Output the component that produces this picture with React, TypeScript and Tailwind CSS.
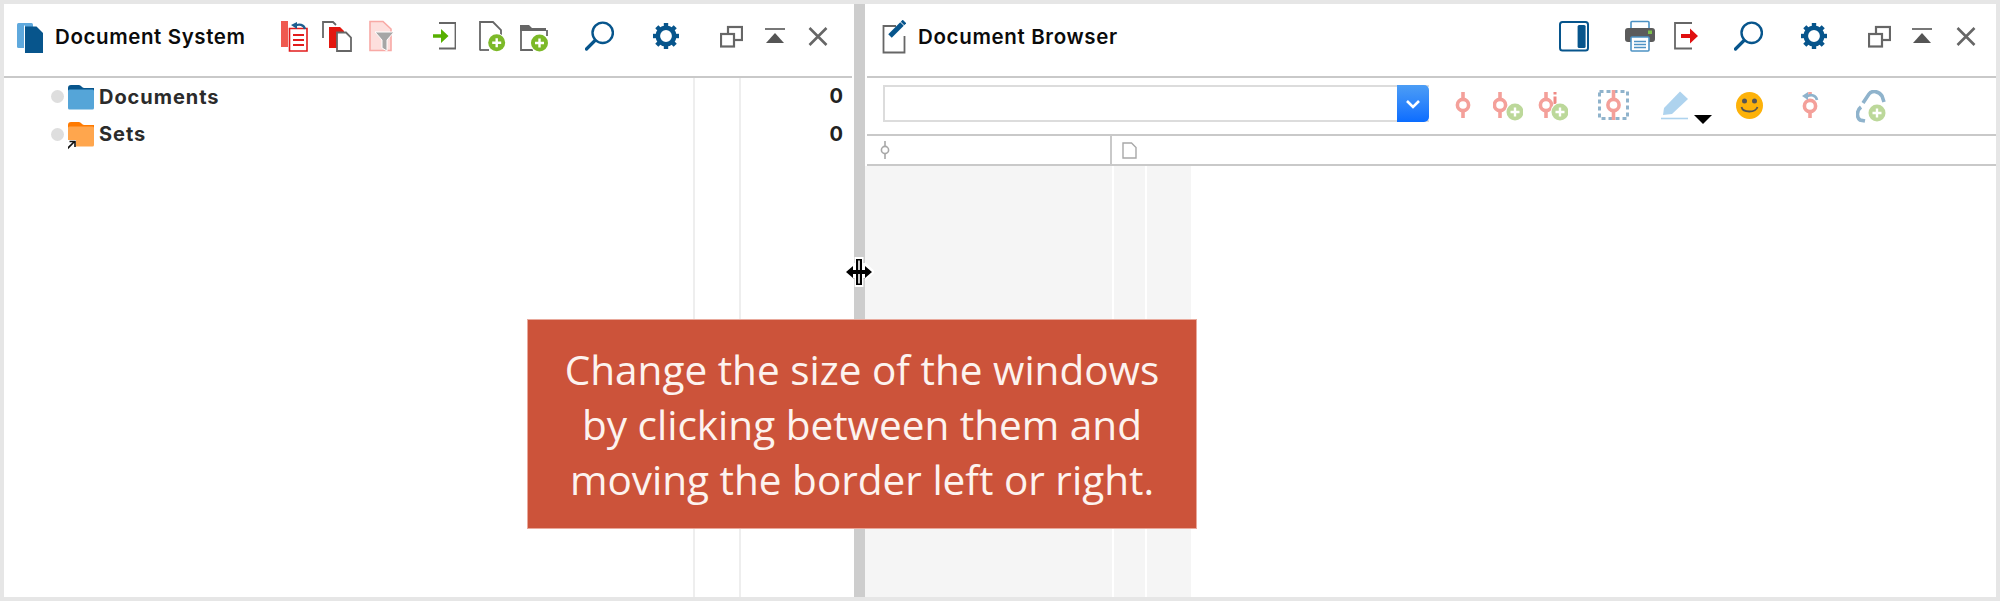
import React from 'react';

const BLUE = '#07558c';
const GRAY = '#666666';
const PINK = '#f4a09a';
const STEEL = '#8fb3cc';

function Svg({ w, h = 32, children, className = '' }: { w: number; h?: number; children: React.ReactNode; className?: string }) {
  return (
    <svg width={w} height={h} viewBox={`0 0 ${w} ${h}`} fill="none" className={`block shrink-0 ${className}`}>
      {children}
    </svg>
  );
}

function Plus({ cx, cy, fill }: { cx: number; cy: number; fill: string }) {
  return (
    <g>
      <circle cx={cx} cy={cy} r="9.5" fill="#fff" />
      <circle cx={cx} cy={cy} r="8.5" fill={fill} />
      <path d={`M${cx - 4.5} ${cy}h9M${cx} ${cy - 4.5}v9`} stroke="#fff" strokeWidth="2.4" />
    </g>
  );
}

function Code({ cx, top = 2, cy = 15, color = PINK }: { cx: number; top?: number; cy?: number; color?: string }) {
  return (
    <g>
      <path d={`M${cx} ${top}V28`} stroke={color} strokeWidth="3.6" />
      <circle cx={cx} cy={cy} r="5.6" fill="#fff" stroke={color} strokeWidth="3.6" />
    </g>
  );
}

const SearchIcon = () => (
  <Svg w={29}>
    <circle cx="17.7" cy="12.8" r="10.2" stroke={BLUE} strokeWidth="2.4" />
    <path d="M10 20.5L1.5 29" stroke={BLUE} strokeWidth="3.2" strokeLinecap="round" />
  </Svg>
);

const GearIcon = () => (
  <Svg w={26}>
    <circle cx="13" cy="16" r="8.2" stroke={BLUE} strokeWidth="4.6" />
    {[0, 45, 90, 135, 180, 225, 270, 315].map((a) => (
      <rect key={a} x="10.8" y="3" width="4.4" height="5" fill={BLUE} transform={`rotate(${a} 13 16)`} />
    ))}
  </Svg>
);

const RestoreIcon = () => (
  <Svg w={23}>
    <rect x="8" y="7" width="14" height="13" stroke={GRAY} strokeWidth="2.2" fill="#fff" />
    <rect x="1" y="14" width="13" height="12.5" stroke={GRAY} strokeWidth="2.2" fill="#fff" />
  </Svg>
);

const CollapseIcon = () => (
  <Svg w={20}>
    <path d="M0 9h20" stroke="#555" strokeWidth="1.6" />
    <path d="M10 13l9 10H1z" fill="#555" />
  </Svg>
);

const CloseIcon = () => (
  <Svg w={20}>
    <path d="M1.5 8l17 17M18.5 8l-17 17" stroke={GRAY} strokeWidth="2.6" />
  </Svg>
);

function Folder({ dark, light, shortcut }: { dark: string; light: string; shortcut?: boolean }) {
  return (
    <Svg w={28} h={28}>
      <path d="M0 5V3a3 3 0 0 1 3-3h8c2 0 3 3 5 3h10v4H0z" fill={dark} />
      <rect x="0" y="4.5" width="26" height="20" rx="1.5" fill={light} />
      {shortcut && (
        <g>
          <rect x="0" y="18" width="8" height="10" fill="#fff" />
          <path d="M-1 27L6 20M1.5 19.5H7V25" stroke="#111" strokeWidth="1.6" />
        </g>
      )}
    </Svg>
  );
}

function TreeRow({ label, children }: { label: string; children: React.ReactNode }) {
  return (
    <div className="flex h-[37.5px] items-center pl-[47px]">
      <span className="h-[13px] w-[13px] rounded-full bg-[#dedede]" />
      <span className="ml-[4px] w-[31px] pt-[4px]">{children}</span>
      <span className="text-[20px] font-bold tracking-[0.95px] text-[#2b2b2b]">{label}</span>
    </div>
  );
}

function LeftPane() {
  return (
    <div className="flex w-[848px] shrink-0 flex-col">
      <div className="flex h-[74px] shrink-0 items-start border-b-2 border-[#c9c9c9] pl-[13px] pt-[16px]">
        <Svg w={26} h={34}>
          <rect x="0" y="3" width="16" height="25" rx="1.5" fill="#5fa9dd" />
          <path d="M8 6.5h11.5L26 13v20H8z" fill={BLUE} />
          <path d="M7 5.5h1v28H7z" fill="#fff" />
        </Svg>
        <span className="ml-[12px] w-[226px] text-[20.5px] leading-[34px] font-semibold tracking-[0.6px] text-[#0b0b0b]">Document System</span>
        <Svg w={27}>
          <rect x="0" y="1" width="7" height="26" fill="#ef5a50" />
          <path d="M8.5 8.5H26V31H8.5z" fill="#fff" stroke="#e21c1c" strokeWidth="1.6" />
          <path d="M12 15h11M12 20h11M12 25h11" stroke="#e21c1c" strokeWidth="1.8" />
          <path d="M24 9c-1-4-6-6-10-3" stroke="#1d5f91" strokeWidth="2.2" />
          <path d="M10 5l6-3v7z" fill="#1d5f91" />
        </Svg>
        <Svg w={31} className="ml-[14px]">
          <path d="M1 18V2h10l3 3" stroke={GRAY} strokeWidth="1.8" />
          <path d="M7 7h11l4 4v17H7z" fill="#e3170f" />
          <path d="M15 12.5h9l5 5V31H15z" fill="#fff" stroke={GRAY} strokeWidth="1.8" />
        </Svg>
        <Svg w={25} className="ml-[16px]">
          <path d="M1 1.5h13L22 9v21.5H1z" fill="#fddfdd" stroke="#f8a9a5" strokeWidth="1.6" />
          <path d="M6 12h19l-7 8v11l-5-3v-8z" fill="#a6a6a6" stroke="#fff" strokeWidth="1" />
        </Svg>
        <Svg w={23} className="ml-[39px]">
          <path d="M6 3h16.5v25.5H6" stroke={GRAY} strokeWidth="1.8" />
          <rect x="4" y="5" width="3" height="22" fill="#fff" />
          <path d="M0 14.2h8V9l7.5 7-7.5 7v-5.2H0z" fill="#57b000" />
        </Svg>
        <Svg w={27} className="ml-[23px]">
          <path d="M1 30.5V2h13l8 8v11" stroke={GRAY} strokeWidth="1.8" />
          <path d="M1 30h9" stroke={GRAY} strokeWidth="1.8" />
          <Plus cx={17.7} cy={22.7} fill="#7cb928" />
        </Svg>
        <Svg w={28} className="ml-[14px]">
          <path d="M0 5h9l3 3h14v3H0z" fill={GRAY} />
          <path d="M1 10v20h12" stroke={GRAY} strokeWidth="1.8" />
          <path d="M27 10v6" stroke={GRAY} strokeWidth="1.8" />
          <Plus cx={19.5} cy={23} fill="#7cb928" />
        </Svg>
        <div className="ml-[37px]"><SearchIcon /></div>
        <div className="ml-[39px]"><GearIcon /></div>
        <div className="ml-[41px]"><RestoreIcon /></div>
        <div className="ml-[22px]"><CollapseIcon /></div>
        <div className="ml-[23px]"><CloseIcon /></div>
      </div>
      <div className="flex min-h-0 flex-1">
        <div className="w-[689px] shrink-0">
          <TreeRow label="Documents"><Folder dark={BLUE} light="#55a5d8" /></TreeRow>
          <TreeRow label="Sets"><Folder dark="#ff7a00" light="#ffa64d" shortcut /></TreeRow>
        </div>
        <div className="w-[46px] shrink-0 border-l-2 border-[#eeeeee]" />
        <div className="flex-1 border-l-2 border-[#eeeeee] pr-[9px] text-right text-[20px] font-bold text-[#222]">
          <div className="h-[37.5px] leading-[37.5px]">0</div>
          <div className="h-[37.5px] leading-[37.5px]">0</div>
        </div>
      </div>
    </div>
  );
}

function RightPane() {
  return (
    <div className="flex min-w-0 flex-1 flex-col">
      <div className="ml-[2px] flex h-[74px] shrink-0 items-start border-b-2 border-[#c9c9c9] pl-[15px] pt-[16px]">
        <Svg w={24} h={34}>
          <path d="M14 6H1.5v26.5h21V16" stroke={GRAY} strokeWidth="1.8" />
          <path d="M8 16L20 4" stroke={BLUE} strokeWidth="5" />
          <path d="M20.5 3.5l2-2" stroke={BLUE} strokeWidth="5" />
        </Svg>
        <span className="ml-[12px] w-[641px] text-[20.5px] leading-[34px] font-semibold tracking-[0.65px] text-[#0b0b0b]">Document Browser</span>
        <Svg w={30}>
          <rect x="1" y="2" width="28" height="28.5" rx="2.5" stroke={BLUE} strokeWidth="2" />
          <rect x="18.6" y="5" width="8" height="23" rx="1.5" fill={BLUE} />
        </Svg>
        <Svg w={30} className="ml-[36px]">
          <rect x="6" y="1.5" width="18" height="9" rx="1" stroke="#4d92c4" strokeWidth="1.6" />
          <rect x="0" y="8" width="30" height="14" rx="3" fill="#5b5b5b" />
          <rect x="23" y="10.5" width="4" height="3.5" fill="#7cc04a" />
          <rect x="6" y="17" width="18" height="14" rx="1" fill="#fff" stroke="#4d92c4" strokeWidth="1.6" />
          <path d="M9 21.5h12M9 24.5h12M9 27.5h12" stroke="#4d92c4" strokeWidth="1.3" />
        </Svg>
        <Svg w={24} className="ml-[19px]">
          <path d="M18 3H1v25.5h17" stroke={GRAY} strokeWidth="1.8" />
          <path d="M7 14h9V8.5L24 16l-8 7.5V18H7z" fill="#e01010" />
        </Svg>
        <div className="ml-[36px]"><SearchIcon /></div>
        <div className="ml-[38px]"><GearIcon /></div>
        <div className="ml-[41px]"><RestoreIcon /></div>
        <div className="ml-[21px]"><CollapseIcon /></div>
        <div className="ml-[24px]"><CloseIcon /></div>
      </div>

      <div className="ml-[2px] flex h-[58px] shrink-0 items-start border-b-2 border-[#c9c9c9] pl-[16px] pt-[7px]">
        <div className="flex h-[37px] w-[546px] shrink-0 border-2 border-r-0 border-[#dcdcdc] bg-white">
          <div className="flex-1" />
          <div className="-my-[2px] flex w-[32px] items-center justify-center rounded-r-[5px] bg-gradient-to-b from-[#4c9df5] to-[#0a6cff]">
            <svg width="16" height="10" viewBox="0 0 16 10" fill="none">
              <path d="M2 2l6 6 6-6" stroke="#fff" strokeWidth="2.6" />
            </svg>
          </div>
        </div>
        <div className="mt-[5px] flex items-start">
          <Svg w={16} h={36} className="ml-[26px]"><Code cx={8} /></Svg>
          <Svg w={30} h={36} className="ml-[22px]">
            <Code cx={7} />
            <Plus cx={22} cy={22} fill="#bcd89a" />
          </Svg>
          <Svg w={30} h={36} className="ml-[15px]">
            <Code cx={8} />
            <path d="M17 2v2.5M17 6.5V14" stroke="#f08a84" strokeWidth="3" />
            <Plus cx={22} cy={22} fill="#bcd89a" />
          </Svg>
          <Svg w={31} h={36} className="ml-[30px]">
            <rect x="1.5" y="1.5" width="28" height="27" stroke={STEEL} strokeWidth="3" strokeDasharray="4 3" />
            <Code cx={15.5} top={0} />
            <path d="M15.5 28v2" stroke={PINK} strokeWidth="3.6" />
          </Svg>
          <Svg w={51} h={36} className="ml-[32px]">
            <path d="M2 25l1-7L19 1.5 27 9 11 24z" fill="#aed3ee" />
            <path d="M0 28.5h27" stroke="#aed3ee" strokeWidth="1.6" />
            <path d="M33 25h18l-9 9z" fill="#000" />
          </Svg>
          <Svg w={27} h={36} className="ml-[24px]">
            <circle cx="13.5" cy="15.5" r="13.5" fill="#fdb20a" />
            <circle cx="8.5" cy="11" r="2.5" fill="#555" />
            <circle cx="18.5" cy="11" r="2.5" fill="#555" />
            <path d="M5.5 17c1.5 6 14 6 16 0" stroke="#555" strokeWidth="1.8" />
          </Svg>
          <Svg w={18} h={36} className="ml-[39px]">
            <path d="M8 2v4" stroke={PINK} strokeWidth="3.6" />
            <Code cx={8} top={12} cy={16} />
            <path d="M15 10c-1-5-6-6-10-3.5" stroke={STEEL} strokeWidth="2.6" />
            <path d="M0 6l6-4v8z" fill={STEEL} />
          </Svg>
          <Svg w={30} h={36} className="ml-[36px]">
            <path d="M7 13l6-9c3-4 10-3 13 2l2 6" stroke={STEEL} strokeWidth="3.6" />
            <path d="M5 17c-4 3-5 10-1 13l5 1" stroke={STEEL} strokeWidth="3.6" />
            <Plus cx={21} cy={23} fill="#bcd89a" />
          </Svg>
        </div>
      </div>

      <div className="ml-[2px] flex h-[30px] shrink-0 border-b-2 border-[#c9c9c9]">
        <div className="flex w-[245px] shrink-0 items-center border-r-2 border-[#c9c9c9] pl-[12px]">
          <svg width="12" height="18" viewBox="0 0 12 18" fill="none">
            <path d="M6 0v18" stroke="#a8a8a8" strokeWidth="1.6" />
            <circle cx="6" cy="9" r="3.6" fill="#fff" stroke="#a8a8a8" strokeWidth="1.6" />
          </svg>
        </div>
        <div className="flex flex-1 items-center pl-[10px]">
          <svg width="15" height="17" viewBox="0 0 15 17" fill="none">
            <path d="M1 1h8.5L14 5.5V16H1z" fill="#fff" stroke="#a8a8a8" strokeWidth="1.4" />
          </svg>
        </div>
      </div>

      <div className="flex min-h-0 flex-1 gap-[2px]">
        <div className="w-[247px] shrink-0 bg-[#f5f5f5]" />
        <div className="w-[31px] shrink-0 bg-[#f5f5f5]" />
        <div className="w-[44px] shrink-0 bg-[#f5f5f5]" />
      </div>
    </div>
  );
}

export default function App() {
  return (
    <div className="relative flex h-[601px] w-[2000px] overflow-hidden bg-[#e6e6e6] p-[4px] [font-family:Inter,sans-serif]">
      <div className="flex min-w-0 flex-1 bg-white">
        <LeftPane />
        <div className="ml-[2px] w-[11px] shrink-0 bg-[#cdcdcd]" />
        <RightPane />
      </div>

      {/* resize cursor */}
      <svg width="32" height="34" viewBox="0 0 32 34" className="absolute left-[843px] top-[256px]">
        <path d="M11.5 3h9v6h1.5V8l9 8-9 8v-1h-1.5v8h-9v-8H10v1l-9-8 9-8v1h1.5z" fill="#8a8a8a" opacity="0.55" />
        <path d="M11.5 1h9v6h1.5V6l9 8.5V17l-9 8v-3h-1.5v9h-9v-9H10v3l-9-8v-2.5L10 6v1h1.5z" fill="#fff" />
        <path d="M13 3h6v26h-6z" fill="#000" />
        <path d="M15.2 4.5h1.6v23h-1.6z" fill="#fff" />
        <path d="M3 16l7-6v4h12v-4l7 6-7 6v-4H10v4z" fill="#000" />
      </svg>

      <div className="absolute left-[527px] top-[319px] flex h-[210px] w-[670px] items-center justify-center border border-[#e9a99c] bg-[#cc533a] text-center text-[40.5px] leading-[55px] text-[#fdf3ef] [font-family:'Open_Sans',sans-serif]">
        <div>
          Change the size of the windows<br />
          by clicking between them and<br />
          moving the border left or right.
        </div>
      </div>
    </div>
  );
}
